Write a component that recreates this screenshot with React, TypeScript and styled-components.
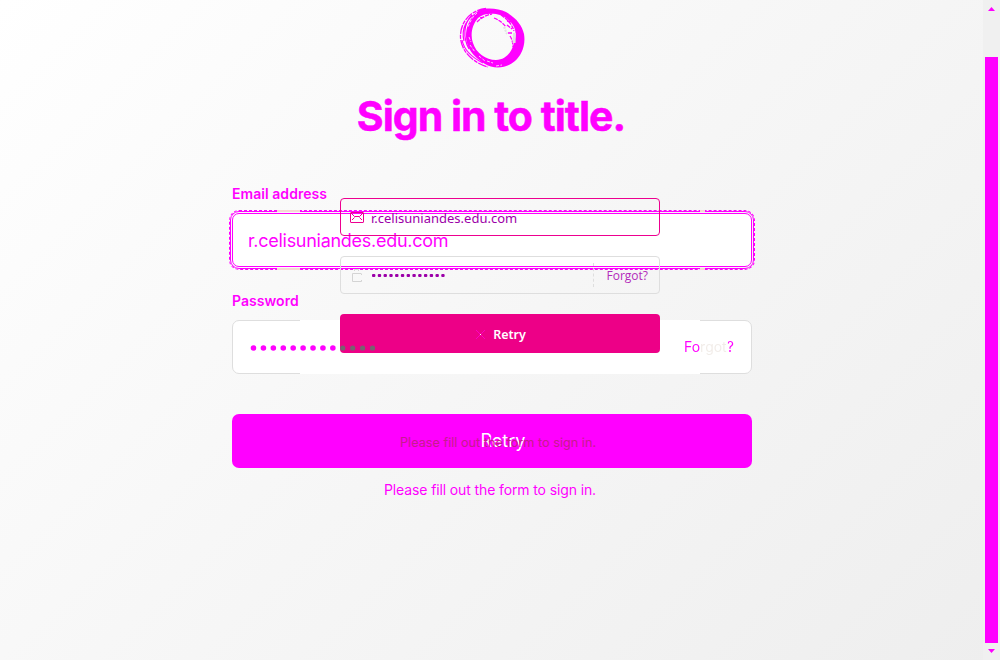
import React from "react";
import styled, { createGlobalStyle } from "styled-components";

const Global = createGlobalStyle`
  * { box-sizing: border-box; }
  html, body { margin: 0; overflow: hidden; }
  body { font-family: Inter, "Liberation Sans", sans-serif; }
`;

const MAGENTA = "#ff00ff";

const Page = styled.div`
  display: flex;
  width: 1000px;
  height: 660px;
  background: linear-gradient(135deg, #ffffff 0%, #f7f7f7 45%, #eeeeee 100%);
`;

const Main = styled.main`
  flex: 1;
  display: flex;
  flex-direction: column;
  padding: 7px 0 0 232px;
  color: ${MAGENTA};
`;

const Content = styled.div`
  position: relative;
  width: 520px;
  display: flex;
  flex-direction: column;
`;

const Logo = styled.svg`
  display: block;
  margin-left: 227px;
`;

const Title = styled.h1`
  margin: 21px 0 0;
  height: 52px;
  line-height: 52px;
  text-align: center;
  white-space: nowrap;
  font-size: 41px;
  font-weight: 700;
  letter-spacing: -1px;
  padding-right: 2px;
  -webkit-text-stroke: 0.5px ${MAGENTA};
`;

const Label = styled.label<{ $top: number }>`
  display: block;
  margin-top: ${(p) => p.$top}px;
  height: 20px;
  line-height: 20px;
  font-size: 14px;
  font-weight: 600;
  letter-spacing: 0.05px;
`;

const EmailField = styled.div`
  position: relative;
  display: flex;
  align-items: center;
  height: 54px;
  margin-top: 9px;
  padding: 0 15px;
  border: 1px solid ${MAGENTA};
  border-radius: 7px;
  background: #fff;
  outline: 1px solid ${MAGENTA};
  outline-offset: 1px;
  font-size: 18px;
  letter-spacing: -0.28px;

  &::before {
    content: "";
    position: absolute;
    inset: -4px;
    border: 1px dashed ${MAGENTA};
    border-radius: 10px;
  }

  &::after {
    content: "";
    position: absolute;
    left: 44px;
    top: -4px;
    width: 479px;
    height: 60px;
    background:
      linear-gradient(#f5d8d5, #f5d8d5) 0 0 / 23px 2px no-repeat,
      linear-gradient(#f5d8d5, #f5d8d5) 0 58px / 23px 2px no-repeat,
      linear-gradient(#f5d8d5, #f5d8d5) 423px 0 / 5px 2px no-repeat,
      linear-gradient(#f5d8d5, #f5d8d5) 423px 58px / 5px 2px no-repeat;
  }
`;

const PasswordField = styled.div`
  display: flex;
  align-items: center;
  height: 54px;
  margin-top: 9px;
  border: 1px solid #dedede;
  border-radius: 7px;
  background: #fff;
`;

const PasswordFill = styled.div`
  flex: none;
  width: 400px;
  height: 54px;
  margin-left: 67px;
  background: #fff;
`;

const Forgot = styled.span`
  font-size: 14px;
  margin: -2px 0 0 -16px;
  background: linear-gradient(90deg, ${MAGENTA} 0 16px, #f1ece8 16px 44px, ${MAGENTA} 44px);
  background-clip: text;
  color: transparent;
`;

const Submit = styled.button`
  position: relative;
  height: 54px;
  margin-top: 40px;
  padding: 0 0 1px 22px;
  border: 0;
  border-radius: 7px;
  background: ${MAGENTA};
  color: #fff;
  font: 400 18px Inter, sans-serif;
`;

const GhostHint = styled.span`
  position: absolute;
  left: 168px;
  top: 20px;
  font-size: 12.7px;
  line-height: 18px;
  white-space: nowrap;
  color: #c61c8c;
`;

const Hint = styled.p`
  margin: 12px 0 0;
  height: 20px;
  line-height: 20px;
  padding-right: 4px;
  font-size: 14px;
  letter-spacing: -0.12px;
  text-align: center;
`;

const Overlay = styled.form`
  position: absolute;
  left: 108px;
  top: 191px;
  width: 320px;
  display: flex;
  flex-direction: column;
  gap: 20px;
  font-family: "Noto Sans", "Open Sans", sans-serif;
`;

const OverlayField = styled.div<{ $active?: boolean }>`
  display: flex;
  align-items: center;
  height: 38px;
  padding-left: 9px;
  border: 1px solid ${(p) => (p.$active ? "#ed0090" : "#dedede")};
  border-radius: 4px;
  color: #9b00a8;
  font-size: 13px;
`;

const OverlayText = styled.span`
  margin: 2px 0 0 7px;
  white-space: nowrap;
`;

const OverlayForgot = styled.span`
  display: flex;
  align-items: center;
  height: 24px;
  margin-left: auto;
  padding: 0 11px 0 12px;
  border-left: 1px dashed #dedede;
  font: 400 12px "Open Sans", sans-serif;
  color: #b32abb;
`;

const OverlayButton = styled.div`
  display: flex;
  align-items: center;
  justify-content: center;
  gap: 7px;
  height: 39px;
  padding: 1px 0 0 1px;
  border-radius: 4px;
  background: #ed0087;
  color: #fff;
  font-size: 12.500px;
  font-weight: 600;
`;

const Dots = styled.svg`
  position: absolute;
  left: 18px;
  top: 337px;
`;

const Scrollbar = styled.aside`
  width: 17px;
  display: flex;
  flex-direction: column;
  align-items: center;
  background: #f0f0f0;
`;

const Arrow = styled.svg`
  display: block;
  width: 17px;
  height: 17px;
  fill: ${MAGENTA};
`;

const Thumb = styled.div`
  width: 13px;
  height: 586px;
  margin-top: 40px;
  background: ${MAGENTA};
`;

function BrushRing() {
  return (
    <Logo width="68" height="62" viewBox="459 7 68 62" fill="none" stroke={MAGENTA}>
      <path
        fill={MAGENTA}
        stroke="none"
        fillRule="evenodd"
        d="M479 10 C489 7 499 9 506 12 C516 18 522 25 524 34 C526 46 521 56 515 61 C506 69 493 69 485 64 C475 58 469 51 467 43 C464 33 468 21 474 15 Z M478 18 C472 25 470 35 473 43 C476 53 486 60 496 60 C505 60 511 53 513 46 C515 40 517 33 514 27 C511 21 504 15 496 14 C489 13 482 14 478 18 Z"
      />
      <path d="M486 8.500 C470 10 460 23 460.500 37 C461 52 474 63 488 67" strokeWidth="1.3" strokeDasharray="9 1 4 1" />
      <path d="M479 12 C466 18 461 29 464 41 M462 40 C464 50 473 58 483 63 M472 15 C463 24 463 38 469 49" strokeWidth="1.2" />
      <path d="M477 22 C483 16 488 15 492 14 M480 18 L484 17 M494 18 C499 20 503 23 506 27 M501 15 C507 19 512 24 514 31 M507 21 L513 22 M507 25 L512 29 M508 33 H512 M510 36 C512 39 513 43 513 47" strokeWidth="1.3" strokeDasharray="4 1" />
      <path d="M477 13 C472 17 470 22 468 27 M469 37 L471 42 M470 45 L475 52 M479 56 L485 61 M487 61 L493 63 M496 66 L502 65" stroke="#fafafa" strokeWidth=".8" strokeDasharray="3 1.500" />
      <path d="M514.500 33 L514 43" stroke="#e2e2e2" strokeWidth="3" />
      <path d="M504 27 L507 34" stroke="#e2e2e2" strokeWidth="2" strokeDasharray="2 1" />
    </Logo>
  );
}

const dots = Array.from({ length: 13 }, (_, i) => i);

export default function App() {
  return (
    <>
      <Global />
      <Page>
        <Main>
          <Content>
            <BrushRing />
            <Title>Sign in to title.</Title>
            <Label $top={42}>Email address</Label>
            <EmailField>r.celisuniandes.edu.com</EmailField>
            <Label $top={24}>Password</Label>
            <PasswordField>
              <PasswordFill />
              <Forgot>Forgot?</Forgot>
            </PasswordField>
            <Submit>
              Retry
              <GhostHint>Please fill out the form to sign in.</GhostHint>
            </Submit>
            <Hint>Please fill out the form to sign in.</Hint>

            <Overlay>
              <OverlayField $active>
                <svg width="14" height="11" viewBox="0 0 14 11" fill="none" stroke="#ed0090">
                  <rect x=".5" y=".5" width="13" height="10" rx=".5" />
                  <path d="M1 1 L4.500 4.500 H9.500 L13 1 M2 8 L4.500 5.500 M12 8 L9.500 5.500" />
                </svg>
                <OverlayText>r.celisuniandes.edu.com</OverlayText>
              </OverlayField>
              <OverlayField>
                <svg width="14" height="15" viewBox="0 0 14 15" fill="none" stroke="#d4d4d4">
                  <path d="M11 5.500 H2.500 V13.500 H11.500 V12 M11.500 5.500 V7 M4.500 3 V1.500 H8.500 V3" />
                </svg>
                <svg width="76" height="6" viewBox="0 0 76 6" style={{ marginLeft: 7 }} fill="#9b00a8">
                  {dots.map((i) => (
                    <rect key={i} x={1 + i * 5.77} y="2" width="3.4" height="3" rx="1" />
                  ))}
                </svg>
                <OverlayForgot>Forgot?</OverlayForgot>
              </OverlayField>
              <OverlayButton>
                <svg width="11" height="11" viewBox="0 0 11 11" stroke="#ff00c8" strokeWidth=".9">
                  <path d="M1 1 L10 10 M10 1 L1 10" />
                  <rect x="5" y="5" width="1" height="1" fill="#fff" stroke="none" />
                </svg>
                Retry
              </OverlayButton>
            </Overlay>

            <Dots width="128" height="8" viewBox="0 0 128 8">
              {dots.map((i) => (
                <circle key={i} cx={3.5 + i * 9.92} cy="4" r={i < 9 ? 2.8 : 2.6} fill={i < 9 ? MAGENTA : "#77636f"} />
              ))}
            </Dots>
          </Content>
        </Main>
        <Scrollbar>
          <Arrow viewBox="0 0 17 17"><path d="M5 11 L8.500 7 L12 11 Z" /></Arrow>
          <Thumb />
          <Arrow viewBox="0 0 17 17"><path d="M5 6 L8.500 10 L12 6 Z" /></Arrow>
        </Scrollbar>
      </Page>
    </>
  );
}
